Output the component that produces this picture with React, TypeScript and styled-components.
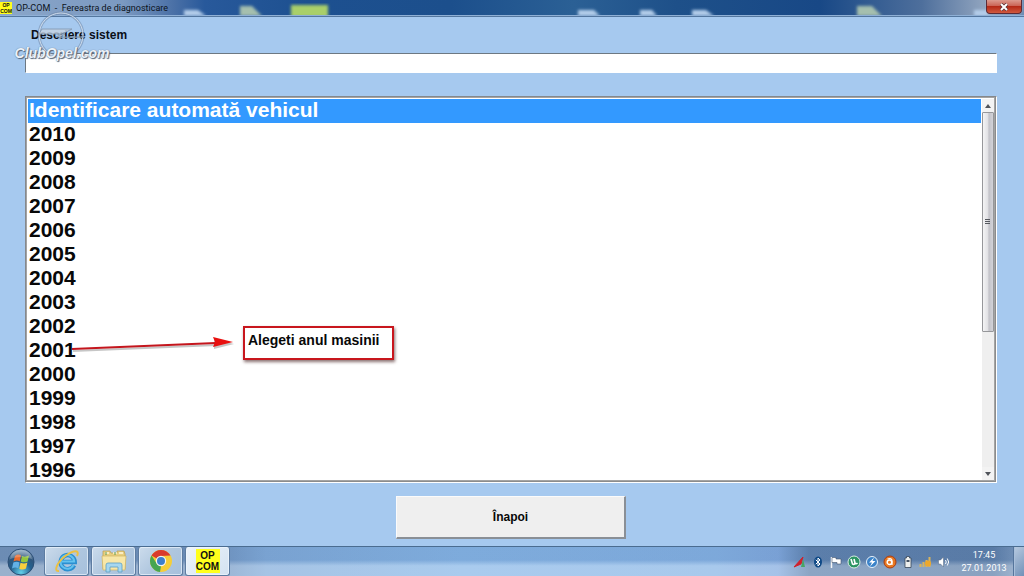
import React, { useState } from "react";
import styled, { createGlobalStyle } from "styled-components";

const Global = createGlobalStyle`
  * { box-sizing: border-box; }
  html, body, #root { height: 100%; margin: 0; }
  body { font-family: "Liberation Sans", Arial, sans-serif; overflow: hidden; }
`;

const Screen = styled.div`
  position: relative;
  height: 100vh;
  display: flex;
  flex-direction: column;
  background: #a6c9ef;
`;

const TitleBar = styled.header`
  position: relative;
  flex: none;
  height: 17px;
  display: flex;
  align-items: flex-start;
  overflow: hidden;
  border-bottom: 1px solid #54779f;
  background: linear-gradient(90deg, #8aa6c9 0%, #7b99c1 12%, #4a70a6 17%, #28599b 20%, #1d5090 30%, #1c4f8c 44%, #2b6095 56%, #1e5089 66%, #184886 80%, #4e6f9c 90%, #8fa3be 96%, #6f8db4 100%);
  &::after {
    content: "";
    position: absolute;
    inset: auto 0 0 0;
    height: 1px;
    background: #8fb0d6;
  }
`;

const Backdrop = styled.svg`
  position: absolute;
  inset: 0;
  width: 100%;
  height: 16px;
`;

const AppIcon = styled.span<{ $large?: boolean }>`
  position: relative;
  display: flex;
  flex-direction: column;
  align-items: center;
  justify-content: center;
  background: #ffff1c;
  color: #111;
  width: ${(p) => (p.$large ? 24 : 12)}px;
  height: ${(p) => (p.$large ? 24 : 12)}px;
  margin-top: ${(p) => (p.$large ? 0 : 2)}px;
  font-size: ${(p) => (p.$large ? 10 : 5)}px;
  line-height: ${(p) => (p.$large ? 11 : 6)}px;
  font-weight: bold;
`;

const Title = styled.h1`
  position: relative;
  margin: 0 0 0 4px;
  font: 9px/16px Roboto, sans-serif;
  color: #0c1320;
  white-space: pre;
`;

const CloseButton = styled.button`
  position: relative;
  margin: 0 2px 0 auto;
  width: 36px;
  height: 14px;
  padding: 0;
  display: flex;
  align-items: center;
  justify-content: center;
  border: 1px solid #5c2a35;
  border-top: 0;
  border-radius: 0 0 4px 4px;
  background: linear-gradient(#dc9a8e 0%, #cb6455 45%, #b52a17 50%, #d0593e 100%);
  box-shadow: 0 0 1px #dfe8f4;
`;

const Main = styled.main`
  position: relative;
  flex: 1;
  min-height: 0;
  display: flex;
  flex-direction: column;
  padding: 11px 27px 7px 25px;
`;

const FieldLabel = styled.label`
  margin: 0 6px 10px;
  font-size: 12px;
  line-height: 15px;
  font-weight: bold;
  color: #0a0f18;
`;

const Field = styled.input`
  flex: none;
  width: 100%;
  height: 20px;
  padding: 0 4px;
  border: 1px solid #fff;
  border-top-color: #6d7882;
  border-left-color: #6d7882;
  border-radius: 0;
  background: #fff;
  outline: none;
`;

const ListFrame = styled.div`
  position: relative;
  flex: 1;
  min-height: 0;
  margin: 23px 0 13px;
  display: flex;
  border: 1px solid #fff;
  border-top-color: #85888c;
  border-left-color: #85888c;
  background: #fff;
  box-shadow: inset -1px -1px #8c8c8c, inset 1px 1px #a4a4a4, inset -2px -2px #a4a4a4;
`;

const YearList = styled.ul`
  flex: 1;
  margin: 2px 0 1px 2px;
  padding: 0;
  list-style: none;
  overflow: hidden;
`;

const YearItem = styled.li<{ $selected: boolean }>`
  height: 24px;
  padding-left: 1px;
  font-size: 21px;
  line-height: 22px;
  font-weight: bold;
  white-space: nowrap;
  cursor: default;
  color: ${(p) => (p.$selected ? "#fff" : "#080808")};
  background: ${(p) => (p.$selected ? "#3399ff" : "transparent")};
`;

const ScrollBar = styled.div`
  flex: none;
  width: 12px;
  margin: 2px 2px 2px 1px;
  display: flex;
  flex-direction: column;
  background: #efefef;
`;

const ScrollButton = styled.button`
  flex: none;
  height: 13px;
  padding: 0;
  border: 0;
  display: flex;
  align-items: center;
  justify-content: center;
  background: #f3f3f3;
`;

const ScrollTrack = styled.div`
  flex: 1;
  min-height: 0;
`;

const ScrollThumb = styled.div`
  height: 62%;
  display: flex;
  align-items: center;
  justify-content: center;
  border: 1px solid #96979a;
  border-radius: 1px;
  background: linear-gradient(90deg, #f4f4f5, #e2e2e5 45%, #c3c3c9 60%, #d3d3d8);
`;

const Annotation = styled.div`
  position: absolute;
  left: 44px;
  top: 229px;
  display: flex;
  align-items: flex-start;
`;

const Callout = styled.p`
  margin: 0 0 0 8px;
  width: 151px;
  height: 34px;
  padding: 3px;
  border: 2px solid #c8161d;
  background: #fff;
  box-shadow: 1px 2px 3px rgba(60, 20, 20, 0.6);
  font-size: 14px;
  line-height: 18px;
  font-weight: bold;
  color: #080808;
  white-space: nowrap;
`;

const BackButton = styled.button`
  flex: none;
  align-self: center;
  width: 230px;
  height: 43px;
  padding: 0;
  border: 1px solid #fbfbfb;
  border-right: 2px solid #8a8f96;
  border-bottom: 2px solid #8a8f96;
  background: #efefef;
  font: bold 12px/16px "Liberation Sans", Arial, sans-serif;
  color: #080808;
`;

const Watermark = styled.div`
  position: absolute;
  left: 14px;
  top: 11px;
  width: 96px;
  display: flex;
  flex-direction: column;
  align-items: center;
  pointer-events: none;
`;

const WatermarkText = styled.span`
  margin-top: -14px;
  font-size: 14px;
  line-height: 16px;
  font-weight: bold;
  font-style: italic;
  color: #eaf1f9;
  text-shadow: 1px 1px 1px #55657a, 0 0 1px #55657a;
`;

const TaskBar = styled.footer`
  flex: none;
  height: 30px;
  display: flex;
  align-items: stretch;
  border-top: 1px solid #4a6c90;
  background:
    linear-gradient(rgba(30, 70, 130, 0.12) 0 45%, rgba(255, 255, 255, 0.26) 65% 100%),
    linear-gradient(90deg, #7796bb 0%, #7394bd 20%, #86afdc 26%, #8bb9e8 45%, #8ab6e6 70%, #86ade0 76%, #6486b0 79%, #6182ab 97%, #86a2c4 100%);
`;

const StartButton = styled.button`
  width: 42px;
  padding: 0;
  border: 0;
  background: none;
  display: flex;
  align-items: center;
  justify-content: center;
`;

const TaskButton = styled.button<{ $active?: boolean }>`
  width: 45px;
  margin-left: 2px;
  padding: 0;
  display: flex;
  align-items: center;
  justify-content: center;
  border: 1px solid #5d7ca1;
  border-top: 0;
  border-radius: 3px;
  background: ${(p) =>
    p.$active
      ? "linear-gradient(135deg, #edf4fb, #d3e2f1)"
      : "linear-gradient(135deg, #ccdcec, #b0c7df 50%, #a6c0dc)"};
  box-shadow: inset 0 0 0 1px rgba(240, 247, 255, 0.65);
`;

const Tray = styled.div`
  margin-left: auto;
  display: flex;
  align-items: center;
  gap: 4px;
`;

const TrayButton = styled.button`
  width: 14px;
  height: 16px;
  padding: 0;
  border: 0;
  background: none;
  display: flex;
  align-items: center;
  justify-content: center;
`;

const Clock = styled.time`
  width: 50px;
  margin-left: 4px;
  font: 9px/13px Roboto, sans-serif;
  color: #fff;
  text-align: center;
  white-space: nowrap;
`;

const ShowDesktop = styled.button`
  align-self: stretch;
  width: 11px;
  padding: 0;
  border: 1px solid #55759c;
  border-width: 0 0 0 1px;
  background: linear-gradient(135deg, #b7cae0, #7191b8);
  box-shadow: inset 1px 0 #a9bfda;
`;

const Svg = styled.svg`
  display: block;
  flex: none;
`;

const OpelLogo = () => (
  <Svg width="60" height="48" viewBox="0 0 60 48">
    <circle cx="29" cy="24" r="22" fill="none" stroke="#6c84a3" strokeWidth="3" opacity=".5" />
    <circle cx="29" cy="24" r="22" fill="none" stroke="#cfdded" strokeWidth="1" />
    <path d="M7 23H33L27 27L51 26H24L40 18H10Z" fill="#c4d3e4" stroke="#8296ae" strokeWidth="1" opacity=".85" />
  </Svg>
);

const StartOrb = () => (
  <Svg width="28" height="28" viewBox="0 0 28 28">
    <defs>
      <radialGradient id="orb" cx=".5" cy=".9" r=".9">
        <stop offset="0" stopColor="#62d0ea" />
        <stop offset=".45" stopColor="#24618f" />
        <stop offset=".7" stopColor="#2f567c" />
        <stop offset="1" stopColor="#9db6cd" />
      </radialGradient>
    </defs>
    <circle cx="14" cy="14" r="13" fill="url(#orb)" stroke="#2b4e76" />
    <path d="M8 8Q11 5.500 14 7.500L12.800 13.200Q9.500 11.600 6.500 13.500Z" fill="#ea6b2d" />
    <path d="M15 8Q18 9.500 22 7.500L20.600 13.500Q17 15.200 13.700 13.500Z" fill="#94c63c" />
    <path d="M6.300 14.600Q9.400 12.900 12.500 14.400L11.300 20.200Q8.200 18.600 5 20.400Z" fill="#63b1e6" />
    <path d="M13.500 14.700Q17 16.300 20.400 14.500L19 20.500Q16 22.500 12.300 20.700Z" fill="#f8cf3d" />
    <path d="M3 11Q5 2 14 2T25 11Q14 7 3 11Z" fill="#fff" opacity=".22" />
  </Svg>
);

const ExplorerE = () => (
  <Svg width="26" height="26" viewBox="0 0 26 26">
    <path d="M20 17.200A7 7 0 1 1 20.700 14H8" fill="none" stroke="#2b8fd0" strokeWidth="4.500" />
    <path d="M19.500 17A6.800 6.800 0 1 1 20.200 13.500H8" fill="none" stroke="#63c2ef" strokeWidth="2" />
    <path d="M5 23C-1 24 3 14 12 7.500C20 2 26 1.500 23 8" fill="none" stroke="#ecc043" strokeWidth="2" />
  </Svg>
);

const FolderIcon = () => (
  <Svg width="26" height="26" viewBox="0 0 26 26">
    <path d="M2 3H9L10 5H16V3H23L24 6V21H2Z" fill="#e9cf80" stroke="#b99b4c" strokeWidth=".7" />
    <path d="M4 5H8M12 5H16M18 5H22" stroke="#fff8d8" strokeWidth="1.500" />
    <path d="M5 4V7M14 4V7" stroke="#5c9c52" />
    <path d="M1 8H25L24 22H2Z" fill="#f8e7a7" stroke="#cfb463" strokeWidth=".7" />
    <path d="M5 24V17Q5 15 7 15H19Q21 15 21 17V24H17V19H9V24Z" fill="#a6d7ef" stroke="#5b9fc5" strokeWidth=".8" />
  </Svg>
);

const ChromeIcon = () => (
  <Svg width="24" height="24" viewBox="0 0 24 24">
    <circle cx="12" cy="12" r="11" fill="#f5ce38" />
    <path d="M12 12L2.500 6.500A11 11 0 0 1 21.500 6.500L12 7Z" fill="#d93b2d" />
    <path d="M2.500 6.500L7.700 14.500L12 17L11 23A11 11 0 0 1 2.500 6.500Z" fill="#46a551" />
    <circle cx="12" cy="12" r="5.200" fill="#f4f6f5" />
    <circle cx="12" cy="12" r="4" fill="#3c80cd" />
  </Svg>
);

const trayIcons: { label: string; art: React.ReactNode }[] = [
  { label: "Grafică", art: <><path d="M1 12L10 2L8 9Z" fill="#d0202c" stroke="#d0202c" /><path d="M10 4L12 12H8Z" fill="#46a565" /></> },
  { label: "Bluetooth", art: <><ellipse cx="7" cy="7" rx="4" ry="5.500" fill="#104a87" /><path d="M4.800 4.800L9 9L7 11V3L9 5L4.800 9.200" fill="none" stroke="#fff" /></> },
  { label: "Centru de acțiune", art: <><path d="M2.500 2V13" stroke="#f7f7f7" strokeWidth="1.500" /><path d="M3 2.500H7V4H12V9H8V7.500H3Z" fill="#fff" stroke="#44556d" strokeWidth=".6" /></> },
  { label: "uTorrent", art: <><circle cx="7" cy="7" r="6" fill="#2c9563" stroke="#d7eee2" /><path d="M4 4L5.500 9Q7.500 10 8 8L7 4M8 8Q9 9.500 10.500 8" fill="none" stroke="#fff" strokeWidth="1.600" /></> },
  { label: "Daemon Tools", art: <><circle cx="7" cy="7" r="5.500" fill="#3b83c9" stroke="#e8f2fb" /><path d="M9 2.500L4 7.500H7L5 11.500L10.500 6H7.500Z" fill="#fff" /></> },
  { label: "Avast", art: <><circle cx="7" cy="7" r="6" fill="#e87820" stroke="#a93c12" /><circle cx="6.500" cy="7.200" r="2.300" fill="none" stroke="#fff" strokeWidth="1.500" /><path d="M4.500 4Q9 2.500 9 6V10" fill="none" stroke="#fff" strokeWidth="1.200" /></> },
  { label: "Baterie", art: <><path d="M5.500 1.500H8.500V3H10V12.500H4V3H5.500Z" fill="#eef0ee" stroke="#394658" strokeWidth=".8" /><path d="M5.500 5H8.500V7H5.500Z" fill="#465363" /></> },
  { label: "Rețea", art: <><path d="M1.500 12V9M4.500 12V7M7.500 12V5M10.500 12V2" stroke="#d9b45c" strokeWidth="2" /><circle cx="9" cy="8.500" r="3" fill="#eda82b" /></> },
  { label: "Volum", art: <><path d="M1.500 5H3.500L6.500 2V12L3.500 9H1.500Z" fill="#fff" stroke="#54677f" strokeWidth=".5" /><path d="M8.500 5Q10 7 8.500 9M10.300 3.500Q13 7 10.300 10.500" fill="none" stroke="#fff" /></> },
];

const OpCom = ({ large }: { large?: boolean }) => (
  <AppIcon $large={large}>
    <span>OP</span>
    <span>COM</span>
  </AppIcon>
);

const entries = [
  "Identificare automată vehicul",
  ...Array.from({ length: 15 }, (_, i) => String(2010 - i)),
];

export default function App() {
  const [selected, setSelected] = useState(0);
  return (
    <>
      <Global />
      <Screen>
        <TitleBar>
          <Backdrop viewBox="0 0 1024 16" preserveAspectRatio="none">
            <defs><filter id="soft"><feGaussianBlur stdDeviation="1.500" /></filter></defs>
            <g filter="url(#soft)">
              <path d="M184 16V10H198L206 16ZM578 16V10H594L600 16ZM640 16V10H652L657 16ZM692 16V10H706L714 16ZM974 16V10H988V16Z" fill="#b3cdea" />
              <path d="M240 16V6H252L262 16ZM857 16V6H872L882 16Z" fill="#a5bfae" />
              <rect x="291" y="5" width="37" height="12" fill="#a9cf69" />
            </g>
          </Backdrop>
          <OpCom />
          <Title>{"OP-COM  -  Fereastra de diagnosticare"}</Title>
          <CloseButton aria-label="Închide">
            <Svg width="10" height="8" viewBox="0 0 10 8">
              <path d="M2 1L8 7M8 1L2 7" stroke="#5a3036" strokeWidth="3.500" />
              <path d="M2 1L8 7M8 1L2 7" stroke="#fff" strokeWidth="2" />
            </Svg>
          </CloseButton>
        </TitleBar>
        <Main>
          <FieldLabel htmlFor="system">Descriere sistem</FieldLabel>
          <Field id="system" type="text" />
          <ListFrame>
            <YearList role="listbox" aria-label="Anul vehiculului">
              {entries.map((entry, i) => (
                <YearItem key={entry} role="option" aria-selected={i === selected} $selected={i === selected} onClick={() => setSelected(i)}>
                  {entry}
                </YearItem>
              ))}
            </YearList>
            <ScrollBar>
              <ScrollButton aria-label="Sus">
                <Svg width="6" height="4" viewBox="0 0 6 4"><path d="M0 4L3 0L6 4Z" fill="#50545a" /></Svg>
              </ScrollButton>
              <ScrollTrack>
                <ScrollThumb>
                  <Svg width="6" height="8" viewBox="0 0 6 8"><path d="M0 1.500H5M0 3.500H5M0 5.500H5" stroke="#55585e" /></Svg>
                </ScrollThumb>
              </ScrollTrack>
              <ScrollButton aria-label="Jos">
                <Svg width="6" height="4" viewBox="0 0 6 4"><path d="M0 0L3 4L6 0Z" fill="#50545a" /></Svg>
              </ScrollButton>
            </ScrollBar>
            <Annotation>
              <Svg width="165" height="35" viewBox="0 0 165 35">
                <g transform="translate(1 2)" opacity=".22"><path d="M2 23L146 17" stroke="#000" strokeWidth="2" /><path d="M143 11L163 16L143 21Z" /></g>
                <path d="M2 23L146 17" stroke="#c4161d" strokeWidth="2" />
                <path d="M143 11L163 16L143 21L145 16Z" fill="#e8100f" />
              </Svg>
              <Callout>Alegeti anul masinii</Callout>
            </Annotation>
          </ListFrame>
          <BackButton>Înapoi</BackButton>
        </Main>
        <TaskBar>
          <StartButton aria-label="Start"><StartOrb /></StartButton>
          <TaskButton aria-label="Internet Explorer"><ExplorerE /></TaskButton>
          <TaskButton aria-label="Explorer"><FolderIcon /></TaskButton>
          <TaskButton aria-label="Chrome"><ChromeIcon /></TaskButton>
          <TaskButton $active aria-label="OP-COM"><OpCom large /></TaskButton>
          <Tray>
            {trayIcons.map(({ label, art }) => (
              <TrayButton key={label} aria-label={label}>
                <Svg width="14" height="14" viewBox="0 0 14 14">{art}</Svg>
              </TrayButton>
            ))}
            <Clock>17:45<br />27.01.2013</Clock>
            <ShowDesktop aria-label="Desktop" />
          </Tray>
        </TaskBar>
        <Watermark>
          <OpelLogo />
          <WatermarkText>ClubOpel.com</WatermarkText>
        </Watermark>
      </Screen>
    </>
  );
}
